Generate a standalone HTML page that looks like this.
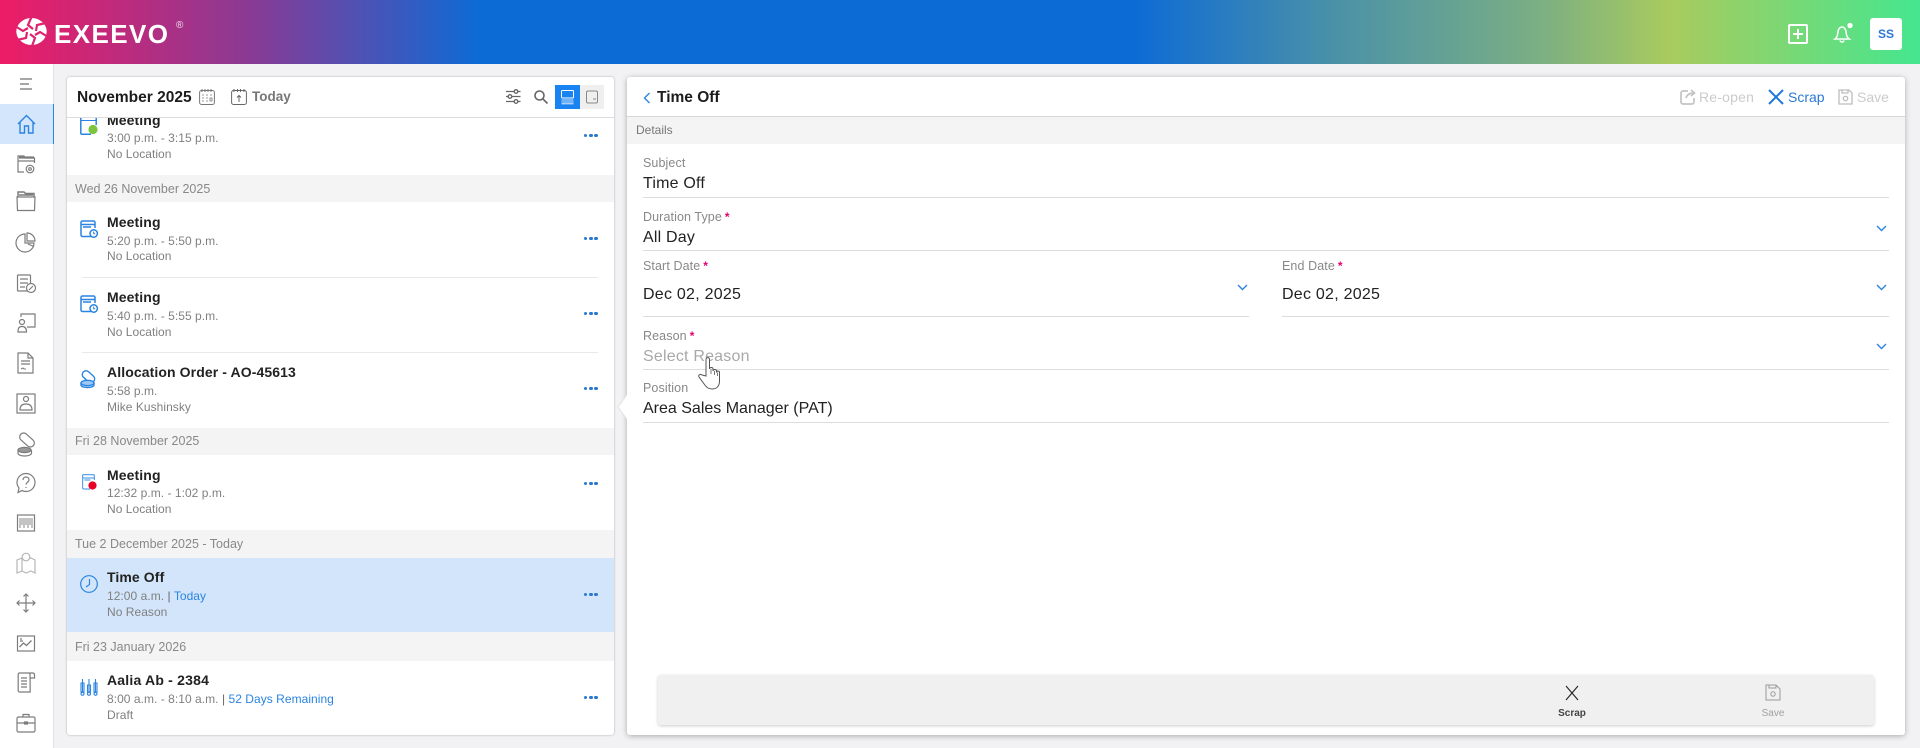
<!DOCTYPE html>
<html lang="en">
<head>
<meta charset="utf-8">
<title>Exeevo</title>
<style>
*{box-sizing:border-box}
html,body{margin:0;padding:0;background:#f2f2f4}
body{width:1920px;height:748px;overflow:hidden;position:relative;background:#f2f2f4;font-family:"Liberation Sans",sans-serif;color:#222;filter:blur(.35px)}
.a{position:absolute}
.t{position:absolute;white-space:nowrap;height:20px;line-height:20px}
svg{position:absolute;overflow:visible;fill:none}
#hdr{left:0;top:0;width:1920px;height:64px;background:linear-gradient(90deg,#ee1c66 0%,#8a3a94 13%,#0d6bd6 25%,#0d6bd6 59%,#4d93a6 70%,#7aae84 80%,#a9cb5e 87%,#45e68f 100%)}
#side{left:0;top:64px;width:54px;height:684px;background:#fff;border-right:1px solid #e2e2e4}
#home{left:0;top:104px;width:54px;height:40px;background:#d4e6fb;border-right:1px solid #2a84e0}
#lc{left:67px;top:77px;width:547px;height:658px;background:#fff;border-radius:3px;box-shadow:0 0 2px rgba(0,0,0,.3);overflow:hidden}
#rc{left:627px;top:77px;width:1278px;height:658px;background:#fff;border-radius:3px;box-shadow:0 1px 6px rgba(0,0,0,.3)}
.bar{position:absolute;left:67px;width:547px;background:#f4f4f4}
.sel{position:absolute;left:67px;width:547px;background:#d3e5fa}
.d{font-size:12.5px;color:#888;left:75px}
.ti{font-size:14px;font-weight:bold;color:#222;left:107px;letter-spacing:.1px}
.s{font-size:12px;color:#808080;left:107px;letter-spacing:.04px}
.s b{font-weight:normal;color:#2a84e0}
.s i{font-style:normal;color:#666}
.sep{position:absolute;height:1px;background:#e8e8e8;left:82px;width:516px}
.dots{position:absolute;left:584px;width:14px;height:4px}
.dots span{position:absolute;top:0;width:3.4px;height:3.4px;border-radius:50%;background:#2a78d0}
.dots span:nth-child(1){left:0}.dots span:nth-child(2){left:5.2px}.dots span:nth-child(3){left:10.4px}
.l{font-size:12.5px;color:#888;left:643px;letter-spacing:.1px}
.l u{text-decoration:none;color:#e5006d;font-weight:bold;font-size:12px;margin-left:3px}
.v{font-size:16px;color:#222;left:643px;letter-spacing:.2px}
.ln{position:absolute;height:1px;background:#dcdcdc}
</style>
</head>
<body>
<div class="a" id="hdr"></div>
<!-- logo -->
<svg style="left:16px;top:18px" width="31" height="27" viewBox="0 0 31 27">
<ellipse cx="15.5" cy="13.5" rx="15.2" ry="13.500" fill="#fff"/>
<g stroke="#e0226e" stroke-width="2.200" stroke-linejoin="miter">
<path d="M15.500 -1L12 7l5 4"/>
<path d="M30 5l-9 2-1 6"/>
<path d="M32 19l-8-5-5 3"/>
<path d="M16 28l3-8-5-4"/>
<path d="M1 22l9-2 1-6"/>
<path d="M-1 8l8 5 5-3"/>
</g>
</svg>
<div class="t" style="left:54px;top:19px;height:30px;line-height:30px;font-size:26px;font-weight:bold;color:#fff;letter-spacing:1.4px">EXEEVO</div>
<div class="t" style="left:176px;top:19px;height:14px;line-height:14px;font-size:10px;color:#fff;opacity:.85">®</div>
<!-- header right -->
<svg style="left:1788px;top:24px" width="20" height="20" viewBox="0 0 20 20" stroke="#fff" stroke-width="2"><rect x="1" y="1" width="18" height="18" rx="1"/><path d="M10 5v10M5 10h10"/></svg>
<svg style="left:1833px;top:24px" width="20" height="20" viewBox="0 0 20 20" stroke="#fff" stroke-width="1.500"><path d="M2 15c2-1.500 2.500-3 2.800-6C5 5 7 3 9 3s4 2 4.200 6c.3 3 1 4.500 3 6z"/><path d="M7 16.500c.5 2 3.500 2 4 0"/><circle cx="17" cy="1.500" r="2.700" fill="#fff" stroke="none"/></svg>
<div class="a" style="left:1870px;top:18px;width:32px;height:32px;background:#fff;border-radius:3px;color:#2a78d6;font-size:12px;font-weight:bold;line-height:33px;text-align:center">SS</div>

<!-- sidebar -->
<div class="a" id="side"></div>
<div class="a" id="home"></div>
<svg style="left:0;top:64px" width="54" height="684" viewBox="0 64 54 684" stroke="#7c7c7c" stroke-width="1.200">
<path d="M20 79h12M20 84h9M20 89h12" stroke="#8a8a8a" stroke-width="1.500"/>
<path d="M18 124l8.500-8.500 8.500 8.500M20 122.500V133h4.500v-7h4v7H33v-10.500" stroke="#2a84e0" stroke-width="1.400"/>
<path d="M18 168v-12h6l1.500 2h9v5M17.500 161h17M18 168v4h6"/><path d="M19 157.500h15" stroke-width="2.200"/><circle cx="30" cy="169" r="3.800"/><circle cx="30" cy="169" r="1.300"/>
<path d="M17 197h18l-.5 13.500h-17z"/><path d="M18 197v-5h6l1.500 1.500h8.500v3.500M19 195h14" stroke-width="1.500"/>
<path d="M25 234a9 9 0 1 0 9 9h-9z"/><path d="M27 233a8 8 0 0 1 8 8h-8zM28 244l6 2.500"/>
<rect x="17.500" y="275" width="13" height="16" rx="1"/><path d="M20 279h8M20 283h8M20 287h5"/>
<circle cx="31" cy="288" r="4.500" fill="#fff"/><path d="M29 290l4-4"/>
<path d="M21 317v-3h14v13h-8"/><circle cx="22" cy="322" r="2.500"/><path d="M18 332c0-4 1-5.500 4-5.500s4.500 1.500 4.500 5.500z"/>
<path d="M18 353h10l5 5v15H18z"/><path d="M28 353v5h5M21 361h9M21 364h9"/><path d="M21 369l2-1 1 1h2" stroke-width="1"/>
<rect x="17" y="394" width="18" height="19"/><circle cx="26" cy="399" r="2.500"/><path d="M20 410c0-4 2-6 6-6s6 2 6 6z"/>
<rect x="18.500" y="436" width="17" height="8" rx="4" transform="rotate(42 27 440)"/><ellipse cx="24.500" cy="450" rx="6.500" ry="2.600" fill="#999"/><path d="M18 450v3c0 2 3 3 6.500 3s7-1 7-3v-3"/>
<path d="M26 473.500c5 0 9 4 9 9 0 5-4 9-9 9-1.500 0-3-.3-4-1l-4 2 1-4.500c-1.200-1.500-2-3.500-2-5.500 0-5 4-9 9-9z"/>
<path d="M23 480c0-2 1.500-3 3-3s3 1 3 3c0 2-3 2.500-3 4.500M26 487v1"/>
<rect x="17.500" y="515" width="17" height="16"/><path d="M20 518v10M22 518v7M24 518v10M26 518v7M28 518v10M30 518v7M32 518v10" stroke-width=".9"/>
<g opacity=".55"><path d="M17 560l5-2v13l-5 2zM22 558l4 2 5-2 4 2v13l-4-2-5 2-4-2"/><circle cx="26" cy="557" r="3.800" fill="#fff"/></g>
<path d="M26 594v18M17 603h18M23.500 596.500l2.500-2.500 2.500 2.500M23.500 609.500l2.500 2.500 2.500-2.500M19.500 600.500L17 603l2.500 2.500M32.500 600.500L35 603l-2.500 2.500"/>
<rect x="17.500" y="636" width="17" height="15"/><path d="M19.500 647l4-4 3 2.500 5-5M20 639h2M20 641h3" stroke-width="1.300"/>
<path d="M30 673H19l-.8 1V691l1 1h11zM30 673h3a2 2 0 0 1 1.500 2V678H30M21 678h6M21 681h6M21 684h6M21 687h6"/>
<rect x="17" y="717" width="18" height="15" rx="1.500"/><path d="M23 717v-2.500h6v2.500M17 723h18"/><rect x="24.500" y="722" width="3" height="2"/>
</svg>

<!-- left card -->
<div class="a" id="lc"></div>
<div class="t" style="left:77px;top:88px;font-size:15.500px;font-weight:bold;color:#1c1c1c">November 2025</div>
<svg style="left:199px;top:89px" width="16" height="16" viewBox="0 0 16 16" stroke="#777"><rect x=".6" y="1.500" width="14.800" height="14" rx="2"/><path d="M3 0v3M6 0v3M9 0v3M12 0v3"/><path d="M3 6h2M7 6h2M11 6h2M3 9h2M7 9h2M3 12h2M7 12h2M11 9h2v3h-2z" stroke-width=".8"/></svg>
<svg style="left:231px;top:89px" width="16" height="16" viewBox="0 0 16 16" stroke="#666"><rect x=".6" y="1.500" width="14.800" height="14" rx="2"/><path d="M3 0v3M6.500 0v3M9.500 0v3M13 0v3M8 13V6.500M6 8.500l2-2 2 2"/></svg>
<div class="t" style="left:252px;top:87px;font-size:13.500px;font-weight:bold;color:#777">Today</div>
<svg style="left:506px;top:89px" width="15" height="15" viewBox="0 0 15 15" stroke="#666" stroke-width="1.300"><path d="M0 2.500h14.500M0 7.500h14.500M0 12.500h14.500"/><circle cx="10" cy="2.500" r="1.800" fill="#fff"/><circle cx="4" cy="7.500" r="1.800" fill="#fff"/><circle cx="10" cy="12.500" r="1.800" fill="#fff"/></svg>
<svg style="left:534px;top:90px" width="14" height="14" viewBox="0 0 14 14" stroke="#666" stroke-width="1.600"><circle cx="5.500" cy="5.500" r="4.500"/><path d="M9 9l4.500 4.500"/></svg>
<div class="a" style="left:555px;top:85px;width:25px;height:24px;background:#1a83f2"></div>
<div class="a" style="left:580px;top:85px;width:24px;height:24px;background:#efefef"></div>
<svg style="left:561px;top:90px" width="13" height="14" viewBox="0 0 13 14" stroke="#fff"><rect x=".5" y=".5" width="12" height="7.500" rx="1"/><path d="M.5 10h12M.5 12h12M.5 13.800h12" stroke-width=".8"/></svg>
<svg style="left:586px;top:90px" width="12" height="14" viewBox="0 0 12 14" stroke="#888"><rect x=".5" y="1" width="11" height="12" rx="1.500"/><path d="M7 9h3"/></svg>
<div class="a" style="left:67px;top:117px;width:547px;height:1px;background:#dcdcdc"></div>

<div class="t ti" style="top:110px;clip-path:inset(8px 0 0 0)">Meeting</div>
<div class="t s" style="top:128px">3:00 p.m. - 3:15 p.m.</div>
<div class="t s" style="top:144px">No Location</div>
<div class="dots" style="top:134px"><span></span><span></span><span></span></div>
<svg style="left:80px;top:118px" width="18" height="17" viewBox="0 0 18 17" stroke="#2a84e0" stroke-width="1.500"><path d="M.8 0v15c0 .8.500 1.200 1.200 1.200h9M16.200 0v7"/><path d="M1 2.500h15" stroke-width="1"/><circle cx="13" cy="11.500" r="4.600" fill="#7cc53e" stroke="none"/></svg>

<div class="bar" style="top:175px;height:27px"></div>
<div class="t d" style="top:179px">Wed 26 November 2025</div>

<div class="t ti" style="top:212px">Meeting</div>
<div class="t s" style="top:231px">5:20 p.m. - 5:50 p.m.</div>
<div class="t s" style="top:246px">No Location</div>
<div class="dots" style="top:237px"><span></span><span></span><span></span></div>
<svg style="left:80px;top:220px" width="18" height="18" viewBox="0 0 18 18" stroke="#2a84e0" stroke-width="1.500"><path d="M11 16.500H2.500a1.500 1.500 0 0 1-1.500-1.500V2.500A1.500 1.500 0 0 1 2.500 1h11A1.500 1.500 0 0 1 15 2.500V8M1 4.500h14M3 7h8"/><circle cx="13.700" cy="13.500" r="3.700" fill="#fff"/><path d="M13.700 11.500v2.200h1.500" stroke-width="1"/></svg>
<div class="sep" style="top:277px"></div>

<div class="t ti" style="top:287px">Meeting</div>
<div class="t s" style="top:306px">5:40 p.m. - 5:55 p.m.</div>
<div class="t s" style="top:322px">No Location</div>
<div class="dots" style="top:312px"><span></span><span></span><span></span></div>
<svg style="left:80px;top:295px" width="18" height="18" viewBox="0 0 18 18" stroke="#2a84e0" stroke-width="1.500"><path d="M11 16.500H2.500a1.500 1.500 0 0 1-1.500-1.500V2.500A1.500 1.500 0 0 1 2.500 1h11A1.500 1.500 0 0 1 15 2.500V8M1 4.500h14M3 7h8"/><circle cx="13.700" cy="13.500" r="3.700" fill="#fff"/><path d="M13.700 11.500v2.200h1.500" stroke-width="1"/></svg>
<div class="sep" style="top:352px"></div>

<div class="t ti" style="top:362px">Allocation Order - AO-45613</div>
<div class="t s" style="top:381px">5:58 p.m.</div>
<div class="t s" style="top:397px">Mike Kushinsky</div>
<div class="dots" style="top:387px"><span></span><span></span><span></span></div>
<svg style="left:80px;top:370px" width="18" height="18" viewBox="0 0 18 18" stroke="#2a84e0" stroke-width="1.400"><rect x="1.500" y="3" width="14" height="7.500" rx="3.700" transform="rotate(42 8.500 6.700)" fill="#fff"/><ellipse cx="7.500" cy="13" rx="6.500" ry="2.700" fill="#9ec8f4"/><path d="M1 13v2c0 1.500 3 2.500 6.500 2.500S14 16.500 14 15v-2"/></svg>

<div class="bar" style="top:428px;height:27px"></div>
<div class="t d" style="top:431px">Fri 28 November 2025</div>

<div class="t ti" style="top:465px">Meeting</div>
<div class="t s" style="top:483px">12:32 p.m. - 1:02 p.m.</div>
<div class="t s" style="top:499px">No Location</div>
<div class="dots" style="top:482px"><span></span><span></span><span></span></div>
<svg style="left:82px;top:474px" width="15" height="16" viewBox="0 0 15 16" stroke="#5da3ec" stroke-width="1.200"><path d="M8 15H1.800C1 15 .6 14.600 .6 14V1.600C.6 1 1 .6 1.800 .6h9.400c.8 0 1.200 .4 1.200 1V6M.6 4h11.800M2.500 6h6"/><circle cx="10.500" cy="11.500" r="4.100" fill="#e60026" stroke="none"/></svg>

<div class="bar" style="top:530px;height:28px"></div>
<div class="t d" style="top:534px">Tue 2 December 2025 - Today</div>
<div class="sel" style="top:558px;height:74px"></div>
<div class="t ti" style="top:567px">Time Off</div>
<div class="t s" style="top:586px">12:00 a.m. <i>|</i> <b>Today</b></div>
<div class="t s" style="top:602px">No Reason</div>
<div class="dots" style="top:593px"><span></span><span></span><span></span></div>
<svg style="left:80px;top:575px" width="18" height="18" viewBox="0 0 18 18" stroke="#2a84e0" stroke-width="1.200"><circle cx="9" cy="9" r="8.300"/><path d="M9.500 4v5.500L6 12"/></svg>

<div class="bar" style="top:632px;height:29px"></div>
<div class="t d" style="top:637px">Fri 23 January 2026</div>
<div class="t ti" style="top:670px;letter-spacing:.2px">Aalia Ab - 2384</div>
<div class="t s" style="top:689px">8:00 a.m. - 8:10 a.m. <i>|</i> <b>52 Days Remaining</b></div>
<div class="t s" style="top:705px">Draft</div>
<div class="dots" style="top:696px"><span></span><span></span><span></span></div>
<svg style="left:80px;top:678px" width="18" height="18" viewBox="0 0 18 18" stroke="#2a84e0" stroke-width="1.100"><path d="M2.500 1v13M9 1v13M15.500 1v13"/><path d="M1 5h3v9H1zM7.500 7h3v7h-3zM14 5h3v9h-3z"/><circle cx="2.500" cy="15.800" r="1.500"/><circle cx="9" cy="15.800" r="1.500"/><circle cx="15.500" cy="15.800" r="1.500"/></svg>

<!-- right card -->
<div class="a" id="rc"></div>
<svg style="left:617px;top:394px" width="12" height="26" viewBox="0 0 12 26"><path d="M10.500 0L1 13l9.500 13" fill="#fff" stroke="#e2e2e2" stroke-width="1"/><path d="M10 0h2v26h-2z" fill="#fff"/></svg>
<svg style="left:643px;top:92px" width="8" height="12" viewBox="0 0 8 12" stroke="#2a84e0" stroke-width="1.400"><path d="M6.500 1L1.500 6l5 5"/></svg>
<div class="t" style="left:657px;top:88px;font-size:15.500px;font-weight:bold;color:#1c1c1c">Time Off</div>

<svg style="left:1680px;top:89px" width="16" height="16" viewBox="0 0 16 16" stroke="#c4c4c4" stroke-width="1.700"><path d="M8 2H3a2 2 0 0 0-2 2v9a2 2 0 0 0 2 2h9a2 2 0 0 0 2-2V9"/><path d="M6 9c1-3.500 4-5 8-5M11 1l3.500 3L11 7"/></svg>
<div class="t" style="left:1699px;top:87px;font-size:14px;color:#cbcbcb;letter-spacing:.2px">Re-open</div>
<svg style="left:1768px;top:89px" width="16" height="16" viewBox="0 0 16 16" stroke="#1f77dc" stroke-width="2"><path d="M1 1l14 14M15 1L1 15"/></svg>
<div class="t" style="left:1788px;top:87px;font-size:14px;color:#2a7ad6">Scrap</div>
<svg style="left:1838px;top:89px" width="15" height="16" viewBox="0 0 15 16" stroke="#bdbdbd" stroke-width="1.300"><path d="M1 1h10l3 3v11H1z"/><path d="M4 1v3h6V1"/><circle cx="7.500" cy="9.500" r="2.200"/></svg>
<div class="t" style="left:1857px;top:87px;font-size:14px;color:#cbcbcb">Save</div>

<div class="a" style="left:627px;top:116px;width:1278px;height:1px;background:#d8d8d8"></div>
<div class="a" style="left:627px;top:117px;width:1278px;height:27px;background:#f4f4f4"></div>
<div class="t" style="left:636px;top:120px;font-size:12px;color:#777">Details</div>

<div class="t l" style="top:153px">Subject</div>
<div class="t v" style="top:174px">Time Off</div>
<div class="ln" style="left:643px;top:197px;width:1246px"></div>

<div class="t l" style="top:207px">Duration Type<u>*</u></div>
<div class="t v" style="top:228px">All Day</div>
<div class="ln" style="left:643px;top:250px;width:1246px"></div>
<svg style="left:1876px;top:225px" width="11" height="7" viewBox="0 0 11 7" stroke="#2a84e0" stroke-width="1.400"><path d="M1 1l4.500 4.500L10 1"/></svg>

<div class="t l" style="top:256px">Start Date<u>*</u></div>
<div class="t v" style="top:285px;letter-spacing:.25px">Dec 02, 2025</div>
<div class="ln" style="left:643px;top:316px;width:606px"></div>
<svg style="left:1237px;top:284px" width="11" height="7" viewBox="0 0 11 7" stroke="#2a84e0" stroke-width="1.400"><path d="M1 1l4.500 4.500L10 1"/></svg>

<div class="t l" style="top:256px;left:1282px">End Date<u>*</u></div>
<div class="t v" style="top:285px;left:1282px;letter-spacing:.25px">Dec 02, 2025</div>
<div class="ln" style="left:1282px;top:316px;width:607px"></div>
<svg style="left:1876px;top:284px" width="11" height="7" viewBox="0 0 11 7" stroke="#2a84e0" stroke-width="1.400"><path d="M1 1l4.500 4.500L10 1"/></svg>

<div class="t l" style="top:326px">Reason<u>*</u></div>
<div class="t v" style="top:347px;color:#a8a8a8">Select Reason</div>
<div class="ln" style="left:643px;top:369px;width:1246px"></div>
<svg style="left:1876px;top:343px" width="11" height="7" viewBox="0 0 11 7" stroke="#2a84e0" stroke-width="1.400"><path d="M1 1l4.500 4.500L10 1"/></svg>

<div class="t l" style="top:378px">Position</div>
<div class="t v" style="top:399px;letter-spacing:0">Area Sales Manager (PAT)</div>
<div class="ln" style="left:643px;top:422px;width:1246px"></div>

<!-- cursor -->
<svg style="left:698px;top:356px" width="26" height="34" viewBox="0 0 26 34" stroke="#555" stroke-width="1"><path d="M8 20V3.500C8 1 11.500 1 11.500 3.500V13c0-2 3.500-2 3.500 0v2c0-2 3.500-2 3.500 0v1.500c0-2 3-2 3 0V25c0 4-2 8-7 8-4 0-6-1.500-8-4.500L1 21c-1-2 1.500-3.500 3-2z" fill="#fff"/><path d="M13 13v5M16.500 15v4M19.500 16.500V20" stroke-width=".8"/></svg>

<!-- bottom bar -->
<div class="a" style="left:658px;top:675px;width:1216px;height:50px;background:#f0f0f0;border-radius:3px;box-shadow:0 1px 3px rgba(0,0,0,.2)"></div>
<svg style="left:1565px;top:686px" width="14" height="14" viewBox="0 0 14 14" stroke="#222" stroke-width="1.100"><path d="M1 0l12 14M13 0L1 14"/></svg>
<div class="t" style="left:1546px;top:704px;width:52px;text-align:center;font-size:10px;color:#444;font-weight:bold">Scrap</div>
<svg style="left:1765px;top:684px" width="16" height="17" viewBox="0 0 16 17" stroke="#9a9a9a"><path d="M1 1h10l4 4v11H1z"/><path d="M4 1v3h7V1"/><circle cx="8" cy="10" r="2.200"/></svg>
<div class="t" style="left:1747px;top:704px;width:52px;text-align:center;font-size:10px;color:#a0a0a0">Save</div>
</body>
</html>
